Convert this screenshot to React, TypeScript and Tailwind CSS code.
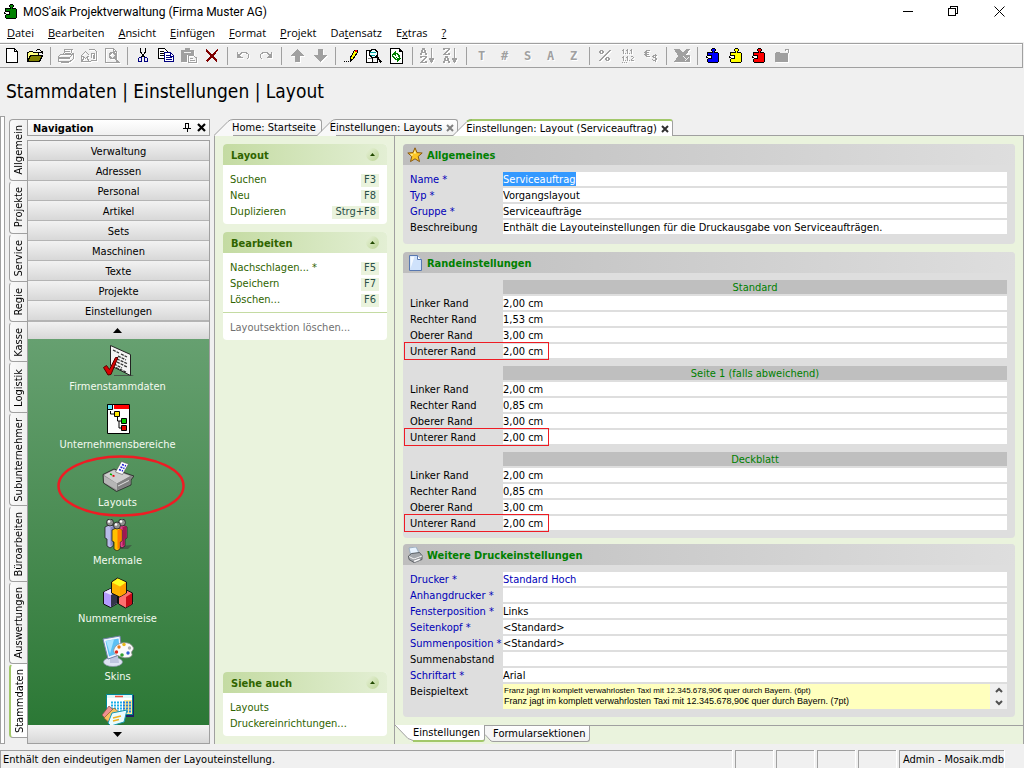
import React, { useId } from "react";

type Kids = { children?: React.ReactNode };

/* ---------- icon helpers ---------- */

function Pix({ rows, colors, className }: { rows: string[]; colors: Record<string, string>; className?: string }) {
  const w = Math.max(...rows.map((r) => r.length));
  return (
    <svg width={w} height={rows.length} viewBox={`0 0 ${w} ${rows.length}`} shapeRendering="crispEdges" className={className} aria-hidden="true">
      {rows.flatMap((row, y) =>
        row.split("").map((c, x) => (colors[c] ? <rect key={`${x}-${y}`} x={x} y={y} width={1} height={1} fill={colors[c]} /> : null)),
      )}
    </svg>
  );
}

function Ico({ children, off, crisp = true }: Kids & { off?: boolean; crisp?: boolean }) {
  return (
    <svg
      width="16"
      height="16"
      viewBox="0 0 16 16"
      fill="none"
      shapeRendering={crisp ? "crispEdges" : "auto"}
      className={off ? "drop-shadow-[1px_1px_0_white]" : ""}
      aria-hidden="true"
    >
      {children}
    </svg>
  );
}

const PUZZLE = [
  "......kkk....",
  ".....kccck...",
  ".....kccck...",
  "......kck....",
  ".kkkkkkckkkk.",
  ".kcccccccccck",
  ".kcccccccccck",
  ".kkkkkccccwck",
  "kwwwwkccccwck",
  "kkwwwkccccwck",
  "..kkkkccccwck",
  ".kcccccccccck",
  ".kcccccccccck",
  ".kcccccccccck",
  "..kkkkkkkkkk.",
];

function Puzzle({ color }: { color: string }) {
  const rows = PUZZLE.map((r) => r.replace(/w(?=ck$)/, "c"));
  return <Pix rows={rows} colors={{ k: "#000000", c: color, w: "#ffffff" }} />;
}

const G = "#a0a0a0";

const NewIcon = () => (
  <Ico>
    <path d="M2.500 .5h8l3 3v11h-11z" fill="#fff" stroke="#000" />
    <path d="M10.500 .5v3h3" stroke="#000" />
  </Ico>
);
const OpenIcon = () => (
  <Ico>
    <path d="M.5 13.500v-9h1l1-1h3l1 1h5v3" fill="#ffff80" stroke="#000" />
    <path d="M.5 13.500l3-6h12l-3 6z" fill="#808000" stroke="#000" />
    <path d="M9 2.500h1m0-1h3m0 1h1m0 1h1m-3 1h3m0-2v3" stroke="#000" />
  </Ico>
);
const PrintIcon = () => (
  <Ico off>
    <path d="M5.500 6.500l1.500-5h7l-1.500 5" stroke={G} />
    <path d="M7 3.500h5M6.500 5h5" stroke={G} />
    <path d="M.5 8.500l2-2h11l2-1v5l-3 2.500H.5z" stroke={G} />
    <path d="M1 9h11v2H1zM3 13h9l-1 2H3z" fill={G} />
    <path d="M12.500 8.500l3-2.500" stroke={G} />
  </Ico>
);
const MailIcon = () => (
  <Ico off>
    <path d="M.5 13.500v-6l4-4 4 4M.5 13.500h9M.5 7.500l4 3 4-3M.5 13.500l3-4m5 4l-3-4" stroke={G} />
    <path d="M7.500 1.500h6l2 2v9h-6M10.500 10V5.500h3v5h-1V7" stroke={G} />
  </Ico>
);
const PreviewIcon = () => (
  <Ico off>
    <path d="M1.500 .5h8l3 3v11h-11zM9.500 .5v3h3" stroke={G} />
    <circle cx="8.500" cy="7.500" r="3" stroke={G} strokeWidth="1.500" />
    <path d="M11 10l4 5" stroke={G} strokeWidth="2" />
  </Ico>
);
const CutIcon = () => (
  <Ico>
    <path d="M5.500 0v4l4 5M10.500 0v4l-4 5" stroke="#000" strokeWidth="1.200" />
    <path d="M4.500 9.500h2v4h-3v-3zM9.500 9.500h2l1 1v3h-3z" stroke="#000080" />
  </Ico>
);
const CopyIcon = () => (
  <Ico>
    <path d="M.5 .5h6l3 3v7h-9z" fill="#fff" stroke="#000" />
    <path d="M2 3.500h4M2 5.500h5M2 7.500h5" stroke="#000" />
    <path d="M6.500 4.500h6l3 3v6h-9z" fill="#fff" stroke="#000080" />
    <path d="M8 7.500h4M8 9.500h6M8 11.500h6M12.500 5v3h3" stroke="#000080" />
  </Ico>
);
const PasteIcon = () => (
  <Ico off>
    <path d="M0 2h4V0h5v2h4v5H6v7H0z" fill={G} />
    <path d="M3 4.500h7" stroke="#f0f0f0" />
    <path d="M7.500 7.500h5l3 2.500v4.500h-8zM9 10.500h3M9 12.500h5" stroke={G} />
  </Ico>
);
const DeleteIcon = () => (
  <Ico>
    <path d="M2 1.500L13 13.500M14 1.500L2.500 13.500" stroke="#800000" strokeWidth="2" />
  </Ico>
);
const UndoIcon = () => (
  <Ico off>
    <path d="M2.500 4v5h5M3 8.500l4-4h4l2.500 2v3l-2 2" stroke={G} />
    <path d="M2 5l5 4H2z" fill={G} />
  </Ico>
);
const RedoIcon = () => (
  <Ico off>
    <path d="M13.500 4v5h-5M13 8.500l-4-4H5l-2.500 2v3l2 2" stroke={G} />
    <path d="M14 5L9 9h5z" fill={G} />
  </Ico>
);
const UpIcon = () => (
  <Ico off>
    <path d="M8 1l7 7h-4v6H6V8H1z" fill={G} />
  </Ico>
);
const DownIcon = () => (
  <Ico off>
    <path d="M8 14l7-7h-4V1H6v6H1z" fill={G} />
  </Ico>
);
const PencilIcon = () => (
  <Ico>
    <path d="M1 13h1v1H1zM3 13h1v1H3zM5 13h1v1H5z" fill="#000" />
    <path d="M7.500 12.500v-3l4-7.500h3v2.500l-4.500 6.500z" fill="#ffff00" stroke="#000" />
    <path d="M7 10l3 2-3 2z" fill="#000" />
    <path d="M12 2h2v2h-2z" fill="#ff0000" />
  </Ico>
);
const FindIcon = () => (
  <Ico>
    <path d="M.5 2.500h6v12H.5zM6 14.500h5.500V11" fill="#fff" stroke="#000" />
    <path d="M2 10.500h4" stroke="#808080" />
    <circle cx="7.500" cy="5.500" r="4" fill="#e8ffff" stroke="#000" strokeWidth="1.400" />
    <path d="M4 4.500h6M5 7.500h4" stroke="#00a0a0" strokeWidth="1.500" />
    <path d="M10.500 8.500l5 6" stroke="#000" strokeWidth="2" />
  </Ico>
);
const REFRESH = [
  "kkkkkkkkkk...",
  "kwwwwwwwwkk..",
  "kwwwwwwwwkkk.",
  "kwwwwgwwwkkkk",
  "kwwwggwwwwwwk",
  "kwwgggggwwwwk",
  "kwggggwggwwwk",
  "kwgwwgwwggwwk",
  "kwggwwwwggwwk",
  "kwwggwgwwgwwk",
  "kwwwggwggggwk",
  "kwwwwgggggwwk",
  "kwwwwwwggwwwk",
  "kwwwwwwgwwwwk",
  "kwwwwwwwwwwwk",
  "kkkkkkkkkkkkk",
];
const SORT_A = ["..ggg...", "..ggg...", ".gg.gg..", ".gg.gg..", ".ggggg..", "gg...gg.", "gg...gg."];
const SORT_Z = ["ggggggg.", "gg...gg.", "....gg..", "...gg...", "..gg....", ".gg..gg.", "ggggggg."];
const SORT_ARROW = ["...g...", "...g...", "...g...", "...g...", "...g...", "...g...", "...g...", "...g...", "...g...", "...g...", ".ggggg.", ".ggggg.", "..ggg..", "..ggg..", "...g..."];
const sortRows = (a: string[], b: string[]) => [...a, "........", ...b].map((r, i) => r + SORT_ARROW[i]);
const NUMBERS = [
  ".g...g...g.",
  "gg..gg..gg.",
  ".g...g...g.",
  ".g...g...g.",
  ".g.g.g.g.g.",
  "...........",
  "...........",
  ".g...g...gg.",
  "gg..gg.....g",
  ".g...g....g.",
  ".g...g...g..",
  ".g.g.g.g.ggg",
  "............",
  "g.g.g.......",
];
const EURO = [
  "..gggg........",
  ".gg...........",
  "ggggg.........",
  ".gg...........",
  "ggggg......g..",
  ".gg......gggg.",
  "..gggg..gg.g..",
  ".........ggg..",
  "...........gg.",
  "........g..gg.",
  ".........ggg..",
  "...........g..",
];
const PERCENT = [
  ".ggg......gg",
  "gg.gg....gg.",
  "gg.gg...gg..",
  ".ggg...gg...",
  "......gg....",
  ".....gg.....",
  "....gg......",
  "...gg..ggg..",
  "..gg..gg.gg.",
  ".gg...gg.gg.",
  "gg.....ggg..",
];
const off = { g: G };
const offCls = "drop-shadow-[1px_1px_0_white]";
const ExcelIcon = () => (
  <Ico off>
    <path d="M0 1h6l3 4 3-4h4l-4 6h4v7H0l4-6z" fill={G} />
    <path d="M9 8l3 3m3-2l-4 4" stroke="#f0f0f0" />
  </Ico>
);
const CaseIcon = () => (
  <Ico off>
    <path d="M1 5h1V4h4v1h8v9H1z" fill={G} />
    <path d="M11.500 2.500v-2m0 1h3v3M11 1.500h2" stroke={G} />
  </Ico>
);

const Letter = ({ children }: Kids) => (
  <span className="font-['DejaVu_Sans_Mono',monospace] text-[12px] leading-none font-bold text-[#a0a0a0] [text-shadow:1px_1px_0_white]">{children}</span>
);

const TOOL_GROUPS: { label: string; icon: React.ReactNode }[][] = [
  [
    { label: "Neu", icon: <NewIcon /> },
    { label: "Öffnen", icon: <OpenIcon /> },
  ],
  [
    { label: "Drucken", icon: <PrintIcon /> },
    { label: "Senden", icon: <MailIcon /> },
    { label: "Seitenansicht", icon: <PreviewIcon /> },
  ],
  [
    { label: "Ausschneiden", icon: <CutIcon /> },
    { label: "Kopieren", icon: <CopyIcon /> },
    { label: "Einfügen", icon: <PasteIcon /> },
    { label: "Löschen", icon: <DeleteIcon /> },
  ],
  [
    { label: "Rückgängig", icon: <UndoIcon /> },
    { label: "Wiederholen", icon: <RedoIcon /> },
  ],
  [
    { label: "Nach oben", icon: <UpIcon /> },
    { label: "Nach unten", icon: <DownIcon /> },
  ],
  [
    { label: "Bearbeiten", icon: <PencilIcon /> },
    { label: "Suchen", icon: <FindIcon /> },
    { label: "Aktualisieren", icon: <Pix rows={REFRESH} colors={{ k: "#000000", w: "#ffffff", g: "#008000" }} /> },
  ],
  [
    { label: "Aufsteigend sortieren", icon: <Pix rows={sortRows(SORT_A, SORT_Z)} colors={off} className={offCls} /> },
    { label: "Absteigend sortieren", icon: <Pix rows={sortRows(SORT_Z, SORT_A)} colors={off} className={offCls} /> },
  ],
  [
    { label: "Text", icon: <Letter>T</Letter> },
    { label: "Nummer", icon: <Letter>#</Letter> },
    { label: "Summe", icon: <Letter>S</Letter> },
    { label: "Artikel", icon: <Letter>A</Letter> },
    { label: "Zwischensumme", icon: <Letter>Z</Letter> },
  ],
  [
    { label: "Prozent", icon: <Pix rows={PERCENT} colors={off} className={offCls} /> },
    { label: "Nummerierung", icon: <Pix rows={NUMBERS} colors={off} className={offCls} /> },
    { label: "Währung", icon: <Pix rows={EURO} colors={off} className={offCls} /> },
  ],
  [{ label: "Excel", icon: <ExcelIcon /> }],
  [
    { label: "Modul Blau", icon: <Puzzle color="#0000ff" /> },
    { label: "Modul Gelb", icon: <Puzzle color="#ffff00" /> },
    { label: "Modul Rot", icon: <Puzzle color="#ff0000" /> },
    { label: "Koffer", icon: <CaseIcon /> },
  ],
];

/* ---------- large navigation icons ---------- */

const Big = ({ children }: Kids) => (
  <svg width="32" height="32" viewBox="0 0 32 32" fill="none" aria-hidden="true">
    {children}
  </svg>
);

const CompanyIcon = () => (
  <Big>
    <path d="M12 30h18l2 1H12z" fill="#4a5a4c" />
    <path d="M8.500 .5l20 9v21l-20-10z" fill="#f4f4f4" stroke="#222" />
    <path d="M11 5l6 3M19 9l6 3M16 11l8 4M15 14l10 4.500M15 17l10 5M12 19l8 4M14 22.500l11 5" stroke="#333" strokeWidth="1.300" strokeDasharray="3 1" />
    <path d="M1.500 22.500l3-2 3 4 6-12h2.500l-7 17-3 .5z" fill="#d80000" stroke="#500" />
  </Big>
);
const UnitsIcon = () => (
  <Big>
    <path d="M5.500 1.500h22v29h-22z" fill="#fff" stroke="#000" />
    <path d="M12 2h15v4H12z" fill="#ff0000" />
    <path d="M8.500 8v3h6M15.500 14v4h5M17 18v7h4" stroke="#000" />
    <path d="M5.500 1.500h5v5h-5z" fill="#60e8ff" stroke="#000" />
    <path d="M12.500 8.500h5v5h-5z" fill="#ffe800" stroke="#000" />
    <path d="M19.500 15.500h5v5h-5z" fill="#00c800" stroke="#000" />
    <path d="M19.500 22.500h5v5h-5z" fill="#e00000" stroke="#000" />
  </Big>
);
const PrinterIcon = () => (
  <Big>
    <path d="M1 13.500L12 8l17 6 3 1-3 4v5l-14.500 6.500L1.500 22z" fill="#8a8a8a" stroke="#222" strokeWidth=".8" />
    <path d="M2 14l10-5 16.500 6-13.500 7.500z" fill="#cfcfcf" />
    <path d="M15 22.500v6.500l13.500-6v-8z" fill="#808080" />
    <path d="M2 15v6.500l13 7.500v-6.500z" fill="#b6b6b6" />
    <path d="M13.500 11l6-10.500 7 2.500-6 10.500z" fill="#fff" stroke="#555" strokeWidth=".6" />
    <path d="M20 3.500l4 1.500M18.500 6l4 1.500M17 8.500l4 1.500" stroke="#2020d0" strokeWidth="1.500" strokeDasharray="2 1" />
    <path d="M8 13l2 .8" stroke="#00b000" strokeWidth="1.500" />
    <path d="M10.500 14.500l2 .8" stroke="#e00000" strokeWidth="1.500" />
    <path d="M16 25l11-5.500" stroke="#e0e0e0" />
  </Big>
);
const Person = ({ x, y, a, b }: { x: number; y: number; a: string; b: string }) => (
  <g>
    <path d={`M${x} ${y + 8}l3-1.500h4l3 1.500v11l-2 1v7l-3 2-3-2v-7l-2-1z`} fill={a} stroke="#222" strokeWidth=".8" />
    <path d={`M${x + 5.500} ${y + 8}l4-1v12l-2 1v6l-2 1z`} fill={b} />
    <circle cx={x + 5} cy={y + 3.500} r="3.500" fill="#909090" stroke="#222" strokeWidth=".8" />
    <circle cx={x + 4} cy={y + 2.500} r="1.300" fill="#fff" />
  </g>
);
const PeopleIcon = () => (
  <Big>
    <path d="M20 27l10-1-4 4h-8z" fill="#3f5f44" />
    <Person x={15} y={0} a="#e0408a" b="#a01850" />
    <Person x={3} y={0} a="#b8bce8" b="#8488c0" />
    <Person x={10} y={3} a="#ffc000" b="#ff7a00" />
  </Big>
);
const CubesIcon = () => (
  <Big>
    <path d="M24 30l8-4-2-3-6 4z" fill="#8a8f8a" />
    <path d="M1.500 15l7-3.500 7 3.500v11.500l-7 4-7-3.500z" fill="#b49cff" stroke="#111" />
    <path d="M2 15l6.500-3 6.500 3-6 3z" fill="#e8e0ff" />
    <path d="M9 18l6-3v11l-6 4z" fill="#33364a" />
    <path d="M16.500 17l8-4 6 3v11l-7 4-7-4z" fill="#ff7070" stroke="#111" />
    <path d="M24 20l6-4v11l-6 3.500z" fill="#c80c18" />
    <path d="M9.500 5l6-4 9 4v11l-7 4-8-4z" fill="#ffb400" stroke="#111" />
    <path d="M10 5.500l6-4 8 4-6 4z" fill="#ffff20" />
    <path d="M18 10l6-4.500V16l-6 3.500z" fill="#ffa000" />
  </Big>
);
const SkinsIcon = () => (
  <Big>
    <ellipse cx="11" cy="27" rx="9.500" ry="4.500" fill="#dfe4f4" stroke="#8890a8" strokeWidth=".7" />
    <path d="M8 21h8l1 7H8z" fill="#bfc6e0" />
    <path d="M1 4L18 1l2 18-14 5z" fill="#f0f4ff" stroke="#7080a8" />
    <path d="M3.500 6L16.500 3.500l1.500 14-11 4z" fill="#5cc0f4" />
    <path d="M4 6l8-1.500-4 14z" fill="#a8e4ff" />
    <path d="M12 14c2-7 16-9 19-2 2 3-3 4-1 7 1 4-8 5-13 2-4-1-6-4-5-7z" fill="#fafafa" stroke="#909090" strokeWidth=".8" />
    <circle cx="17" cy="12" r="1.700" fill="#e87818" />
    <circle cx="22" cy="9.500" r="1.700" fill="#e8b818" />
    <circle cx="27.500" cy="13" r="1.700" fill="#b0b0b0" />
    <circle cx="14.500" cy="17" r="1.700" fill="#e02818" />
    <circle cx="20" cy="20" r="1.800" fill="#30a030" />
    <circle cx="26" cy="18" r="1.700" fill="#3060d0" />
  </Big>
);
const CalendarIcon = () => (
  <Big>
    <path d="M6 2h26v22H6z" fill="#202060" />
    <path d="M4.500 1.500h26v20h-26z" fill="#fff" stroke="#008898" />
    <path d="M5 2h25v3H5z" fill="#e4f8f8" />
    <path d="M13 3.500h8" stroke="#f05040" strokeWidth="1.500" />
    <path d="M9 9.500h13M9 12.500h13M9 15.500h13M9 18.500h13" stroke="#20b0e8" strokeWidth="2" strokeDasharray="2 1" />
    <path d="M22 7h8v14h-8z" fill="#ffe890" />
    <path d="M21 9.500h8M21 12.500h8M21 15.500h8M21 18.500h8" stroke="#2080e0" strokeWidth="2" strokeDasharray="2 1" />
    <path d="M0 22l7-9 8 7-7 11z" fill="#f09090" stroke="#884848" strokeWidth=".7" />
    <path d="M2 25l10-10 7 6-9 11z" fill="#f8c060" stroke="#886020" strokeWidth=".7" />
    <path d="M6 30l4-10 15-3-3 12-13 4z" fill="#e8fcff" stroke="#1898b0" />
    <path d="M11 25l8-2M11 28l6-1.500" stroke="#f0b020" strokeWidth="1.500" />
  </Big>
);

const NAV_ITEMS = [
  { label: "Firmenstammdaten", icon: <CompanyIcon /> },
  { label: "Unternehmensbereiche", icon: <UnitsIcon /> },
  { label: "Layouts", icon: <PrinterIcon />, marked: true },
  { label: "Merkmale", icon: <PeopleIcon /> },
  { label: "Nummernkreise", icon: <CubesIcon /> },
  { label: "Skins", icon: <SkinsIcon /> },
];

const NAV_SECTIONS = ["Verwaltung", "Adressen", "Personal", "Artikel", "Sets", "Maschinen", "Texte", "Projekte", "Einstellungen"];

const SIDE_TABS = [
  { label: "Allgemein", h: "h-[62px]" },
  { label: "Projekte", h: "h-[53px]" },
  { label: "Service", h: "h-[48px]" },
  { label: "Regie", h: "h-[40px]" },
  { label: "Kasse", h: "h-[40px]" },
  { label: "Logistik", h: "h-[51px]" },
  { label: "Subunternehmer", h: "h-[93px]" },
  { label: "Büroarbeiten", h: "h-[76px]" },
  { label: "Auswertungen", h: "h-[82px]" },
  { label: "Stammdaten", h: "h-[74px]", active: true },
];

const MENU = [
  ["", "D", "atei"],
  ["", "B", "earbeiten"],
  ["", "A", "nsicht"],
  ["", "E", "infügen"],
  ["", "F", "ormat"],
  ["", "P", "rojekt"],
  ["Da", "t", "ensatz"],
  ["E", "x", "tras"],
  ["", "?", ""],
];

/* ---------- window head ---------- */

function TitleBar() {
  return (
    <header className="flex h-[23px] shrink-0 items-center bg-white pr-[2px] pl-1">
      <Puzzle color="#008000" />
      <h1 className="ml-[6px] flex-1 font-[Roboto,sans-serif] text-[12px] leading-none whitespace-nowrap">MOS'aik Projektverwaltung (Firma Muster AG)</h1>
      <div className="flex">
        <button aria-label="Minimieren" className="flex w-[46px] justify-center">
          <svg width="11" height="11" viewBox="0 0 11 11" shapeRendering="crispEdges"><path d="M0 5.500h10" stroke="#000" /></svg>
        </button>
        <button aria-label="Wiederherstellen" className="flex w-[45px] justify-center">
          <svg width="11" height="11" viewBox="0 0 11 11" fill="none" stroke="#000" shapeRendering="crispEdges"><path d="M.5 2.500h7v7h-7zM2.500 2V.5h7v7H8" /></svg>
        </button>
        <button aria-label="Schließen" className="flex w-[46px] justify-center">
          <svg width="11" height="11" viewBox="0 0 11 11" stroke="#000"><path d="M.5 .5l10 10M10.500 .5l-10 10" /></svg>
        </button>
      </div>
    </header>
  );
}

function MenuBar() {
  return (
    <nav aria-label="Menü" className="flex h-[19px] shrink-0 items-center bg-white font-['Open_Sans',sans-serif] text-[11px] leading-none">
      {MENU.map(([a, b, c]) => (
        <button key={a + b + c} className="px-[7px] whitespace-nowrap">
          {a}
          <u>{b}</u>
          {c}
        </button>
      ))}
    </nav>
  );
}

function ToolBar() {
  return (
    <div role="toolbar" aria-label="Werkzeuge" className="mt-[1px] mr-[1px] flex h-[25px] shrink-0 items-center border border-l-0 border-[#a0a0a0] bg-[#f0f0f0] shadow-[inset_0_1px_0_white]">
      {TOOL_GROUPS.map((group, i) => (
        <React.Fragment key={i}>
          {i > 0 && (
            <div className="flex w-2 shrink-0 justify-center">
              <div className="h-[18px] w-px bg-[#a0a0a0]" />
            </div>
          )}
          {group.map((t) => (
            <button key={t.label} aria-label={t.label} className="flex h-[22px] w-[23px] shrink-0 items-center justify-center">
              {t.icon}
            </button>
          ))}
        </React.Fragment>
      ))}
    </div>
  );
}

/* ---------- navigation ---------- */

function Arrow({ down }: { down?: boolean }) {
  return (
    <svg width="9" height="5" viewBox="0 0 9 5" aria-hidden="true">
      <path d={down ? "M0 0h9L4.500 5z" : "M0 5h9L4.500 0z"} fill="#000" />
    </svg>
  );
}

const BAR = "flex w-full shrink-0 items-center justify-center bg-linear-to-b from-[#f2f2f2] to-[#d8d8d8]";

function Navigation() {
  return (
    <aside className="flex w-[183px] shrink-0 flex-col">
      <div className="flex h-[17px] shrink-0 items-center border border-[#a0a0a0] bg-linear-to-b from-white to-[#f0f0f0] pr-[3px] pl-[5px]">
        <h2 className="flex-1 pt-[2px] font-bold">Navigation</h2>
        <button aria-label="Anheften" className="mr-[6px]">
          <svg width="8" height="9" viewBox="0 0 8 9" fill="none" shapeRendering="crispEdges" stroke="#000"><path d="M2.500 5V.5h3V5M0 5.500h8M4 6v3M5 1v4" /></svg>
        </button>
        <button aria-label="Schließen">
          <svg width="9" height="9" viewBox="0 0 9 9" stroke="#000" strokeWidth="2.200"><path d="M1 1l7 7M8 1l-7 7" /></svg>
        </button>
      </div>
      <div className="mt-1 flex min-h-0 flex-1 flex-col border border-[#a0a0a0]">
        {NAV_SECTIONS.map((s) => (
          <button key={s} className={`${BAR} h-5 border-b border-[#b4b4b4] pt-[2px]`}>{s}</button>
        ))}
        <button aria-label="Nach oben blättern" className={`${BAR} h-[18px] border-t border-[#b4b4b4] pr-[2px]`}>
          <Arrow />
        </button>
        <div className="min-h-0 flex-1 overflow-hidden bg-linear-to-b from-[#66a070] to-[#2b7835] pt-[6px]">
          {NAV_ITEMS.map((n) => (
            <button key={n.label} className="relative flex h-[58px] w-full flex-col items-center pr-[2px] text-[#f4faf0]">
              {n.icon}
              <span className="mt-[3px] leading-[13px]">{n.label}</span>
              {n.marked && (
                <svg width="128" height="62" viewBox="0 0 128 62" fill="none" className="absolute -top-[6px] left-[29px]" aria-hidden="true">
                  <ellipse cx="64" cy="31" rx="62.500" ry="29.500" stroke="#ee1c24" strokeWidth="2.500" />
                </svg>
              )}
            </button>
          ))}
          <button aria-label="Weitere Stammdaten" className="flex w-full justify-center pr-[2px]">
            <CalendarIcon />
          </button>
        </div>
        <button aria-label="Nach unten blättern" className={`${BAR} h-[18px] pr-[2px]`}>
          <Arrow down />
        </button>
      </div>
    </aside>
  );
}

function SideTabs() {
  return (
    <div role="tablist" aria-orientation="vertical" className="ml-1 flex w-[18px] shrink-0 flex-col">
      {SIDE_TABS.map((t) => (
        <button
          key={t.label}
          role="tab"
          aria-selected={!!t.active}
          className={`${t.h} flex shrink-0 items-center justify-center rounded-l-[4px] border-y border-l border-t-transparent border-b-[#a0a0a0] first:border-t-[#a0a0a0] ${
            t.active ? "border-l-2 border-l-[#a2c86a] bg-white" : "border-l-[#a0a0a0] bg-linear-to-r from-[#fafafa] to-[#f0f0f0]"
          }`}
        >
          <span className="rotate-180 leading-[15px] whitespace-nowrap [writing-mode:vertical-rl]">{t.label}</span>
        </button>
      ))}
    </div>
  );
}

/* ---------- document tabs ---------- */

function DocTab({ label, close, active, first }: { label: string; close?: boolean; active?: boolean; first?: boolean }) {
  return (
    <div className={`relative flex ${first ? "" : "-ml-[5px]"} ${active ? "z-10 h-[17px]" : "h-4"}`}>
      <svg width="19" height="17" viewBox="0 0 19 17" fill="none" className="shrink-0" aria-hidden="true">
        <path d="M0 17L14 2.500Q16 .5 19 .5V17z" fill={active ? "#fff" : "#f8f8f8"} />
        <path d="M0 16.500L14 2.500Q16 .5 19 .5" stroke="#a0a0a0" />
        {active && <path d="M14 2.500Q16 1 19 1" stroke="#92bb5c" strokeWidth="2" />}
      </svg>
      <div className={`flex items-center rounded-tr-[3px] border-t border-r border-r-[#a0a0a0] ${active ? "border-t-2 border-t-[#a2c86a] bg-white" : "border-t-[#a0a0a0] bg-linear-to-b from-white to-[#f0f0f0]"} ${close ? "pr-[3px]" : "pr-[5px]"}`}>
        <button role="tab" aria-selected={!!active} className={`pt-px leading-[14px] whitespace-nowrap ${first ? "-ml-px" : "-ml-[6px]"}`}>{label}</button>
        {close && (
          <button aria-label={`${label} schließen`} className="ml-1">
            <svg width="8" height="8" viewBox="0 0 8 8" stroke={active ? "#303030" : "#808080"} strokeWidth="2"><path d="M1 1l6 6M7 1L1 7" /></svg>
          </button>
        )}
      </div>
    </div>
  );
}

/* ---------- task pane ---------- */

function TaskCard({ title, children }: Kids & { title: string }) {
  return (
    <section className="overflow-hidden rounded-[4px] bg-white text-[#2f6400]">
      <div className="flex h-[21px] items-center justify-between bg-linear-to-r from-[#c4dba2] to-[#e3efd4] px-2">
        <h3 className="pt-[2px] font-bold">{title}</h3>
        <button aria-label={`${title} einklappen`} className="flex size-[13px] items-center justify-center rounded-full bg-linear-to-br from-[#e8f2da] to-[#bcd494]">
          <svg width="5" height="3" viewBox="0 0 5 3"><path d="M0 3h5L2.500 0z" fill="#204800" /></svg>
        </button>
      </div>
      {children}
    </section>
  );
}

function Task({ label, hot }: { label: string; hot?: string }) {
  return (
    <li className="flex h-4 items-center justify-between">
      <a href="#" className="whitespace-nowrap">{label}</a>
      {hot && <kbd className="flex h-[13px] items-center bg-[#eaf3dd] px-[3px] font-[inherit] text-[#2a5048]">{hot}</kbd>}
    </li>
  );
}

const TASKS = "pt-[7px] pr-2 pb-1 pl-[7px]";

function TaskPane() {
  return (
    <div className="flex w-[180px] shrink-0 flex-col border-r border-[#a0a0a0] py-2 pr-[7px] pl-2">
      <div className="flex flex-col gap-2">
        <TaskCard title="Layout">
          <ul className={TASKS}>
            <Task label="Suchen" hot="F3" />
            <Task label="Neu" hot="F8" />
            <Task label="Duplizieren" hot="Strg+F8" />
          </ul>
        </TaskCard>
        <TaskCard title="Bearbeiten">
          <ul className={TASKS}>
            <Task label="Nachschlagen... *" hot="F5" />
            <Task label="Speichern" hot="F7" />
            <Task label="Löschen..." hot="F6" />
          </ul>
          <ul className={`${TASKS} border-t border-[#c4dba2] text-[#707070]`}>
            <Task label="Layoutsektion löschen..." />
          </ul>
        </TaskCard>
      </div>
      <div className="mt-auto">
        <TaskCard title="Siehe auch">
          <ul className={TASKS}>
            <Task label="Layouts" />
            <Task label="Druckereinrichtungen..." />
          </ul>
        </TaskCard>
      </div>
    </div>
  );
}

/* ---------- form ---------- */

const StarIcon = () => (
  <Ico crisp={false}>
    <path d="M8 .8l2 4.800 5.200.4-4 3.400 1.300 5.200L8 11.800l-4.500 2.800 1.300-5.200-4-3.400L6 5.600z" fill="#fbc524" stroke="#8a5a10" />
    <path d="M8 3l1 3.500H6.500zM3 7l3 .3-1 2z" fill="#fff2a0" />
  </Ico>
);
const PageIcon = () => (
  <Ico crisp={false}>
    <path d="M2.500 .5h8l4 4v11h-12z" fill="#cfe2fb" stroke="#5878b0" />
    <path d="M3.500 1.500h4l-4 12z" fill="#f4f9ff" />
    <path d="M10.500 .5v4h4" fill="#fff" stroke="#5878b0" />
  </Ico>
);
const SmallPrinterIcon = () => (
  <Ico crisp={false}>
    <path d="M3.500 7L2 1l7-1 3 6z" fill="#e8f4ff" stroke="#88a0b8" strokeWidth=".7" />
    <path d="M1.500 9l3-2.500 8-1 2.500 3v4l-8 3-5-3z" fill="#a4a8ac" stroke="#484c50" strokeWidth=".8" />
    <path d="M2 9.500l5 2.500 8-3" stroke="#f4f4f4" />
    <path d="M6 13.500l7-2.500.5 2-6 2.500z" fill="#fff" stroke="#707478" strokeWidth=".6" />
  </Ico>
);

function Group({ title, icon, tight, children }: Kids & { title: string; icon: React.ReactNode; tight?: boolean }) {
  return (
    <section className="overflow-hidden rounded-[4px] bg-[#dedede]">
      <div className="flex h-[21px] items-center bg-linear-to-r from-[#bebebe] to-[#dedede] pl-1">
        {icon}
        <h3 className="ml-1 pt-[2px] font-bold text-[#008000]">{title}</h3>
      </div>
      <div className={`flex flex-col pt-[7px] pr-2 pl-[7px] ${tight ? "gap-[6px] pb-[6px]" : "pb-2"}`}>{children}</div>
    </section>
  );
}

type FieldProps = { label: string; value: string; link?: boolean; blueValue?: boolean; selected?: boolean; marked?: boolean };

function Field({ label, value, link, blueValue, selected, marked }: FieldProps) {
  const id = useId();
  return (
    <div className="relative flex h-4 items-start">
      <label htmlFor={id} className={`w-[93px] shrink-0 leading-4 whitespace-nowrap ${link ? "text-[#0000b8]" : "text-black"}`}>{label}</label>
      <div className="flex h-[14px] min-w-0 flex-1 bg-white">
        <input
          id={id}
          defaultValue={value}
          className={`h-4 min-w-0 p-0 leading-4 outline-none ${
            selected
              ? "field-sizing-content bg-[linear-gradient(#3399ff,#3399ff)] bg-[length:100%_14px] bg-no-repeat text-white"
              : `w-full bg-transparent ${blueValue ? "text-[#0000b8]" : "text-black"}`
          }`}
        />
      </div>
      {marked && <div className="pointer-events-none absolute -top-[2px] -left-[6px] h-[18px] w-[145px] border border-[#ee1c24]" />}
    </div>
  );
}

const MARGINS = [
  { title: "Standard", values: ["2,00 cm", "1,53 cm", "3,00 cm", "2,00 cm"] },
  { title: "Seite 1 (falls abweichend)", values: ["2,00 cm", "0,85 cm", "3,00 cm", "2,00 cm"] },
  { title: "Deckblatt", values: ["2,00 cm", "0,85 cm", "3,00 cm", "2,00 cm"] },
];
const MARGIN_LABELS = ["Linker Rand", "Rechter Rand", "Oberer Rand", "Unterer Rand"];

function Form() {
  return (
    <div className="flex flex-col px-2 pt-2">
      <Group title="Allgemeines" icon={<StarIcon />}>
        <Field label="Name *" value="Serviceauftrag" link selected />
        <Field label="Typ *" value="Vorgangslayout" link />
        <Field label="Gruppe *" value="Serviceaufträge" link />
        <Field label="Beschreibung" value="Enthält die Layouteinstellungen für die Druckausgabe von Serviceaufträgen." />
      </Group>
      <div className="h-2" />
      <Group title="Randeinstellungen" icon={<PageIcon />} tight>
        {MARGINS.map((m) => (
          <fieldset key={m.title} className="min-w-0">
            <div className="flex h-4 items-start pl-[93px]">
              <div className="h-[14px] flex-1 bg-[#bfbfbf] text-center leading-4 text-[#008000]">{m.title}</div>
            </div>
            {MARGIN_LABELS.map((l, i) => (
              <Field key={l} label={l} value={m.values[i]} marked={i === 3} />
            ))}
          </fieldset>
        ))}
      </Group>
      <div className="h-[6px]" />
      <Group title="Weitere Druckeinstellungen" icon={<SmallPrinterIcon />}>
        <Field label="Drucker *" value="Standard Hoch" link blueValue />
        <Field label="Anhangdrucker *" value="" link />
        <Field label="Fensterposition *" value="Links" link />
        <Field label="Seitenkopf *" value="<Standard>" link />
        <Field label="Summenposition *" value="<Standard>" link />
        <Field label="Summenabstand" value="" />
        <Field label="Schriftart *" value="Arial" link />
        <div className="flex h-[25px]">
          <span className="w-[93px] shrink-0 leading-4">Beispieltext</span>
          <div className="min-w-0 flex-1 overflow-hidden bg-[#ffffbe] pt-px pl-px font-['Liberation_Sans',sans-serif] whitespace-nowrap">
            <p className="text-[8px] leading-[11px]">Franz jagt im komplett verwahrlosten Taxi mit 12.345.678,90€ quer durch Bayern. (6pt)</p>
            <p className="text-[9px] leading-[11px]">Franz jagt im komplett verwahrlosten Taxi mit 12.345.678,90€ quer durch Bayern. (7pt)</p>
          </div>
          <div className="flex w-[17px] shrink-0 flex-col items-center justify-around bg-[#f0f0f0]">
            {["M1 5l3-3 3 3", "M1 1l3 3 3-3"].map((d, i) => (
              <button key={d} aria-label={i ? "Abwärts" : "Aufwärts"}>
                <svg width="8" height="6" viewBox="0 0 8 6" fill="none" stroke="#505050" strokeWidth="2"><path d={d} /></svg>
              </button>
            ))}
          </div>
        </div>
      </Group>
    </div>
  );
}

function BottomTabs() {
  return (
    <div role="tablist" className="mt-auto flex h-[19px] shrink-0 items-start border-t border-[#a0a0a0]">
      <svg width="18" height="16" viewBox="0 0 18 16" fill="none" className="-mt-px shrink-0" aria-hidden="true">
        <path d="M0 0h18v15.500h-3z" fill="#fff" />
        <path d="M0 0l13 13.500 5 2" stroke="#a0a0a0" />
      </svg>
      <button role="tab" aria-selected="true" className="-mt-px h-[17px] rounded-br-[3px] border-r border-b-2 border-r-[#a0a0a0] border-b-[#a2c86a] bg-white pr-1 leading-[16px]">Einstellungen</button>
      <svg width="8" height="16" viewBox="0 0 8 16" fill="none" className="shrink-0" aria-hidden="true">
        <path d="M0 0h8v15.500H6L0 9z" fill="#f6f6f6" />
        <path d="M0 8.500l6 6.500 2 .5" stroke="#a0a0a0" />
      </svg>
      <button role="tab" aria-selected="false" className="h-4 rounded-br-[3px] border-r border-b border-[#a0a0a0] bg-linear-to-b from-white to-[#f0f0f0] pr-1 leading-[15px]">Formularsektionen</button>
    </div>
  );
}

/* ---------- status bar ---------- */

function StatusBar() {
  const cell = "h-[18px] border-t border-l border-[#a0a0a0] shadow-[1px_0_0_white]";
  return (
    <footer className="mt-[6px] flex shrink-0 gap-[3px] pr-5">
      <div className={`${cell} flex-1 pl-[2px] leading-[17px]`}>Enthält den eindeutigen Namen der Layouteinstellung.</div>
      {[0, 1, 2, 3].map((i) => (
        <div key={i} className={`${cell} w-[38px]`} />
      ))}
      <div className={`${cell} w-[105px] pl-[3px] leading-[17px] whitespace-nowrap`}>Admin - Mosaik.mdb</div>
    </footer>
  );
}

export default function App() {
  return (
    <div className="flex h-screen flex-col overflow-hidden bg-[#f0f0f0] font-['DejaVu_Sans_Condensed',sans-serif] text-[11px] leading-[14px] text-black">
      <TitleBar />
      <MenuBar />
      <ToolBar />
      <div className="flex h-12 shrink-0 items-center pb-[2px] pl-[6px] text-[19px] leading-none">Stammdaten | Einstellungen | Layout</div>
      <main className="flex min-h-0 flex-1">
        <div className="w-[5px] shrink-0 border border-[#a0a0a0] bg-white" />
        <div className="flex min-w-0 flex-1 pt-[3px]">
          <SideTabs />
          <Navigation />
          <div className="ml-1 flex min-w-0 flex-1 flex-col">
            <div role="tablist" className="flex h-4 shrink-0">
              <DocTab label="Home: Startseite" first />
              <DocTab label="Einstellungen: Layouts" close />
              <DocTab label="Einstellungen: Layout (Serviceauftrag)" close active />
            </div>
            <div className="flex min-h-0 flex-1 border-x border-t border-[#a0a0a0] bg-[#eaf3dd]">
              <TaskPane />
              <div className="flex min-w-0 flex-1 flex-col">
                <Form />
                <BottomTabs />
              </div>
            </div>
          </div>
        </div>
      </main>
      <StatusBar />
    </div>
  );
}
